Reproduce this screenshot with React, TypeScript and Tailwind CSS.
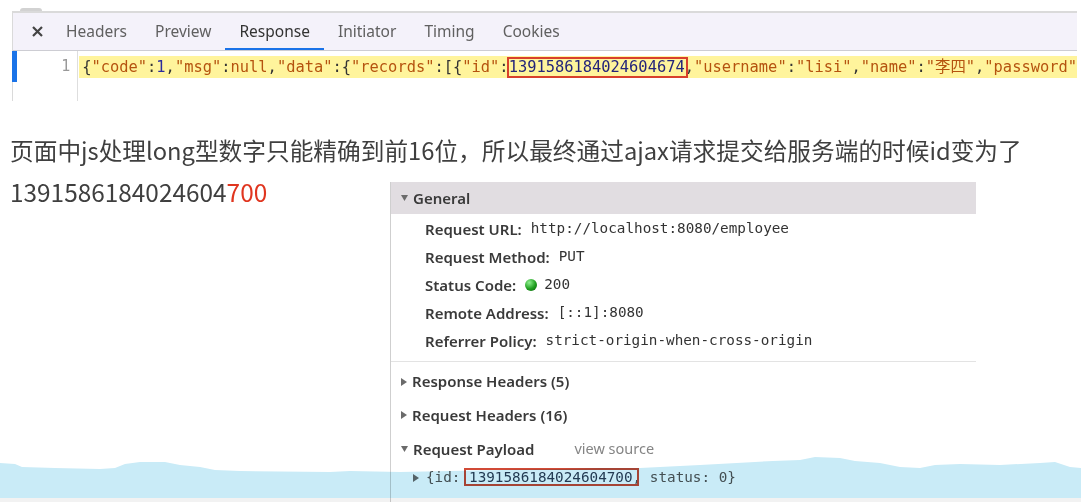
import React from "react";

const UI = "font-['Noto_Sans',sans-serif]";
const MONO = "font-['DejaVu_Sans_Mono','Noto_Sans_CJK_SC',monospace]";

const TriDown = () => (
  <svg width="7" height="6" viewBox="0 0 7 6" className="shrink-0">
    <polygon points="0,0 7,0 3.5,6" fill="#6b6b6b" />
  </svg>
);

const TriRight = () => (
  <svg width="6" height="8" viewBox="0 0 6 8" className="shrink-0">
    <polygon points="0,0 6,4 0,8" fill="#6b6b6b" />
  </svg>
);

const tabs = ["Headers", "Preview", "Response", "Initiator", "Timing", "Cookies"];

const general: [string, React.ReactNode][] = [
  ["Request URL:", "http://localhost:8080/employee"],
  ["Request Method:", "PUT"],
  [
    "Status Code:",
    <span className="flex items-center gap-[7px]">
      <span className="inline-block w-[12px] h-[12px] rounded-full bg-[radial-gradient(circle_at_35%_30%,#8ef08e,#1f9e1f_55%,#0b5e0b)]" />
      200
    </span>,
  ],
  ["Remote Address:", "[::1]:8080"],
  ["Referrer Policy:", "strict-origin-when-cross-origin"],
];

// wave top edge, traced from the video overlay
const wavePts: [number, number][] = [
  [0, 11], [15, 12], [22, 15], [55, 16], [100, 17], [115, 16], [125, 12], [140, 10],
  [165, 10], [180, 13], [200, 15], [215, 18], [240, 19], [330, 20], [350, 19], [400, 20],
  [500, 18], [560, 17], [600, 16], [640, 16], [700, 13], [773, 9], [800, 8], [815, 5],
  [840, 6], [855, 9], [880, 11], [900, 15], [920, 16], [935, 13], [960, 12], [1000, 13],
  [1040, 11], [1055, 10], [1070, 15], [1081, 16],
];
const wavePath =
  "M0,46 " + wavePts.map(([x, y]) => `L${x},${y}`).join(" ") + " L1081,46 Z";

const Key = ({ children }: { children: React.ReactNode }) => (
  <span className="text-[#b5530f]">{children}</span>
);
const P = ({ children }: { children: React.ReactNode }) => (
  <span className="text-[#333]">{children}</span>
);

export default function App() {
  return (
    <div className={`relative w-[1081px] h-[502px] overflow-hidden bg-white ${UI}`}>
      {/* DEVTOOLS RESPONSE PANEL */}
      <div className="pt-[8px] pl-[12px] pr-[4px]">
        <div className="ml-[8px] h-[3px] w-[22px] rounded-t-md bg-[#d2d2d2]" />
        <div className="border-t-2 border-l border-[#dadada]">
          {/* tab bar */}
          <div className="flex h-[38px] bg-[#f4f2fa] border-b border-[#cdcdd3]">
            <div className="w-[39px] flex items-center pl-[19px]">
              <svg width="11" height="11" viewBox="0 0 11 11">
                <path d="M1 1 L10 10 M10 1 L1 10" stroke="#444" strokeWidth="2.2" />
              </svg>
            </div>
            {tabs.map((t) => (
              <div
                key={t}
                className={`relative flex items-center px-[14px] text-[15.5px] ${
                  t === "Response" ? "text-[#333]" : "text-[#606060]"
                }`}
              >
                {t}
                {t === "Response" && (
                  <div className="absolute left-0 right-0 bottom-0 h-[2px] bg-[#1a73e8]" />
                )}
              </div>
            ))}
          </div>

          {/* code */}
          <div className="flex h-[50px]">
            <div className="relative w-[66px] border-r border-[#dedede] flex justify-end pr-[7px] pt-[5px]">
              <div className="absolute -left-[1px] top-0 w-[5px] h-[31px] bg-[#1a73e8]" />
              <span className={`${MONO} text-[15px] leading-[21px] text-[#999]`}>1</span>
            </div>
            <div className="flex-1 pl-[1px] pt-[5px]">
              <div
                className={`h-[22px] bg-[#fff49c] pl-[3px] ${MONO} text-[15.4px] leading-[22px] whitespace-nowrap overflow-hidden`}
              >
                <P>{"{"}</P>
                <Key>"code"</Key>
                <P>:</P>
                <span className="text-[#2b2b9c]">1</span>
                <P>,</P>
                <Key>"msg"</Key>
                <P>:</P>
                <Key>null</Key>
                <P>,</P>
                <Key>"data"</Key>
                <P>:{"{"}</P>
                <Key>"records"</Key>
                <P>:[{"{"}</P>
                <Key>"id"</Key>
                <P>:</P>
                <span className="relative text-[#24247a]">
                  1391586184024604674
                  <span className="absolute -left-[2px] -right-[3px] -top-[1px] -bottom-[2px] border-2 border-[#d8402c]" />
                </span>
                <P>,</P>
                <Key>"username"</Key>
                <P>:</P>
                <Key>"lisi"</Key>
                <P>,</P>
                <Key>"name"</Key>
                <P>:</P>
                <Key>"李四"</Key>
                <P>,</P>
                <Key>"password"</Key>
              </div>
            </div>
          </div>
        </div>
      </div>

      {/* EXPLANATION */}
      <p className="mt-[32px] pl-[10px] font-['Noto_Sans_CJK_SC',sans-serif] text-[23.7px] leading-[34px] text-[#3f3f3f] whitespace-nowrap">
        页面中js处理long型数字只能精确到前16位，所以最终通过ajax请求提交给服务端的时候id变为了
      </p>

      <div className="mt-[8px] flex items-start">
        <div className="w-[390px] pl-[10px] font-['Noto_Sans_CJK_SC',sans-serif] text-[24.4px] leading-[34px] text-[#3f3f3f]">
          1391586184024604<span className="text-[#e0351f]">700</span>
        </div>

        {/* DEVTOOLS HEADERS PANEL */}
        <div className="mt-[7px] w-[586px] h-[320px] border-l border-[#cfcfcf]">
          <div className="h-[32px] bg-[#e1dde1] flex items-center gap-[5px] pl-[10px] text-[15px] font-semibold text-[#3a3a3a]">
            <TriDown />
            General
          </div>
          <div className="pt-[1px] pb-[6px] border-b border-[#e3e3e3]">
            {general.map(([label, value]) => (
              <div key={label} className="h-[28px] flex items-center pl-[34px] gap-[9px]">
                <span className="text-[15px] font-semibold text-[#3a3a3a]">{label}</span>
                <span className={`${MONO} text-[14.3px] text-[#333]`}>{value}</span>
              </div>
            ))}
          </div>
          <div className="pt-[3px]">
            <div className="h-[33px] flex items-center gap-[5px] pl-[10px] text-[15px] font-semibold text-[#3a3a3a]">
              <TriRight />
              Response Headers (5)
            </div>
            <div className="h-[34px] flex items-center gap-[5px] pl-[10px] text-[15px] font-semibold text-[#3a3a3a]">
              <TriRight />
              Request Headers (16)
            </div>
            <div className="h-[34px] flex items-center pl-[10px]">
              <div className="flex items-center gap-[5px] text-[15px] font-semibold text-[#3a3a3a]">
                <TriDown />
                Request Payload
              </div>
              <span className="ml-[40px] text-[14.5px] text-[#858585]">view source</span>
            </div>
            <div className={`h-[24px] flex items-center gap-[7px] pl-[22px] ${MONO} text-[14.3px] text-[#555] whitespace-nowrap`}>
              <TriRight />
              <span>
                {"{id: "}
                <span className="relative text-[#2c3f55]">
                  1391586184024604700
                  <span className="absolute -left-[5px] -right-[6px] -top-[1px] -bottom-[1px] border-2 border-[#d14a36]" />
                </span>
                {", status: 0}"}
              </span>
            </div>
          </div>
        </div>
      </div>

      {/* VIDEO WAVE OVERLAY */}
      <svg
        className="absolute left-0 bottom-0 pointer-events-none mix-blend-multiply"
        width="1081"
        height="50"
        viewBox="0 0 1081 50"
      >
        <path d={wavePath} fill="#c9ebf7" />
        <rect x="0" y="46" width="1081" height="4" fill="#f2f2f2" />
      </svg>
    </div>
  );
}
